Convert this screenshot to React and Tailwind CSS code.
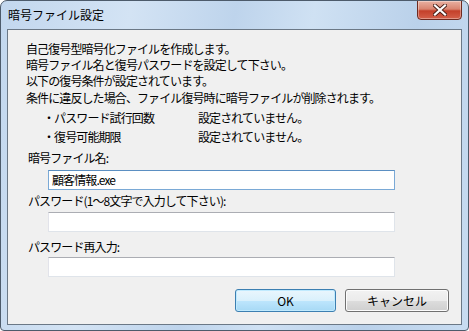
import React from "react";

const font = { fontFamily: '"MS UI Gothic","Noto Sans CJK JP",sans-serif' };

function Line({ children, className = "" }) {
  return <div className={`h-[16px] leading-[16px] whitespace-nowrap ${className}`}>{children}</div>;
}

function TextBox({ value = "", focused = false }) {
  return (
    <div
      className={`ml-[37px] w-[347px] h-[20px] bg-white border flex items-center px-[3px] text-[12px] text-black ${
        focused
          ? "border-[#7aa9d6] border-t-[#5b8fc2]"
          : "border-[#dfe4ea] border-t-[#abadb3] border-l-[#e2e3ea]"
      }`}
    >
      {value}
    </div>
  );
}

export default function App() {
  return (
    <div
      className="w-[469px] h-[331px] relative overflow-hidden rounded-t-[7px] rounded-b-[4px] border border-[#4d5b6b] bg-[linear-gradient(100deg,#c2d7ee_0%,#d3e3f4_25%,#bed4ec_45%,#cfe1f3_60%,#bad1ea_80%,#c8dcf1_100%)] flex flex-col"
      style={font}
    >
      {/* title bar */}
      <div className="h-[28px] flex items-start relative">
        <div className="pl-[7px] pt-[7px] text-[12px] leading-[14px] text-black">暗号ファイル設定</div>
        <div className="absolute right-[6px] top-[-1px] w-[45px] h-[20px] rounded-b-[4px] border border-[#6e2a20] bg-[linear-gradient(to_bottom,#e9b1a2_0%,#d98470_45%,#c4402a_55%,#d4604a_100%)] flex items-center justify-center shadow-[inset_0_0_0_1px_rgba(255,255,255,0.35)]">
          <svg width="14" height="12" viewBox="0 0 14 12">
            <path d="M2 1.5 L12 10.5 M12 1.5 L2 10.5" stroke="#4a2018" strokeWidth="4" strokeLinecap="square" />
            <path d="M2 1.5 L12 10.5 M12 1.5 L2 10.5" stroke="#ffffff" strokeWidth="2.2" strokeLinecap="square" />
          </svg>
        </div>
      </div>

      {/* client area */}
      <div className="mx-[6px] h-[296px] bg-[#f0f0f0] border border-[#6b7886] text-[12px] text-black tracking-[-0.9px]">
        <div className="pl-[18px] pt-[11px]">
          <Line>自己復号型暗号化ファイルを作成します。</Line>
          <Line>暗号ファイル名と復号パスワードを設定して下さい。</Line>
          <Line>以下の復号条件が設定されています。</Line>
          <Line className="mt-[1px]">条件に違反した場合、ファイル復号時に暗号ファイルが削除されます。</Line>
          <div className="mt-[4px] flex h-[16px] leading-[16px]">
            <div className="pl-[17px] w-[172px] whitespace-nowrap">・パスワード試行回数</div>
            <div className="whitespace-nowrap">設定されていません。</div>
          </div>
          <div className="mt-[3px] flex h-[16px] leading-[16px]">
            <div className="pl-[17px] w-[172px] whitespace-nowrap">・復号可能期限</div>
            <div className="whitespace-nowrap">設定されていません。</div>
          </div>
        </div>
        <div className="pl-[3px]">
          <div className="ml-[17px] mt-[5px]">
            <Line>暗号ファイル名:</Line>
          </div>
          <div className="mt-[4px]">
            <TextBox value="顧客情報.exe" focused />
          </div>
          <div className="ml-[17px] mt-[3px]">
            <Line>パスワード(1～8文字で入力して下さい):</Line>
          </div>
          <div className="mt-[3px]">
            <TextBox />
          </div>
          <div className="ml-[17px] mt-[7px]">
            <Line>パスワード再入力:</Line>
          </div>
          <div className="mt-[2px]">
            <TextBox />
          </div>
        </div>
        <div className="mt-[12px] flex justify-end gap-[9px] pr-[12px] tracking-normal">
          <button className="w-[101px] h-[23px] rounded-[3px] border border-[#3c7fb1] bg-[linear-gradient(to_bottom,#eaf6fd_0%,#d9f0fc_50%,#bee6fd_51%,#a7d9f5_100%)] shadow-[inset_0_0_0_1px_#c0eafe] text-[12px] text-black">
            OK
          </button>
          <button className="w-[104px] h-[23px] rounded-[3px] border border-[#707070] bg-[linear-gradient(to_bottom,#f2f2f2_0%,#ebebeb_50%,#dddddd_51%,#cfcfcf_100%)] shadow-[inset_0_0_0_1px_#fcfcfc] text-[12px] text-black">
            キャンセル
          </button>
        </div>
      </div>
    </div>
  );
}
